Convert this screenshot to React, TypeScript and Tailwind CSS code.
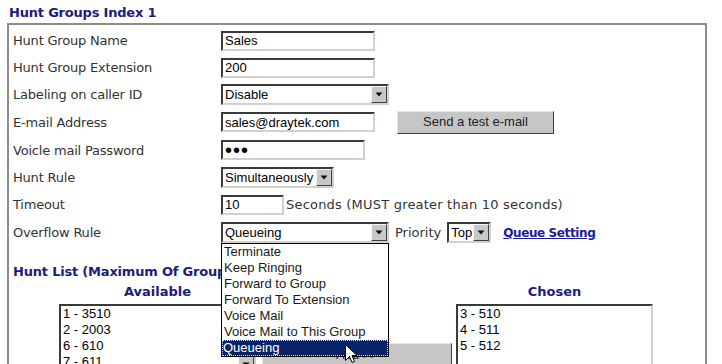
import React from "react";

const sunken =
  "border-2 border-t-[#3a3a3a] border-l-[#3a3a3a] border-b-[#d4d0c8] border-r-[#d4d0c8] bg-white";

function Arrow() {
  return (
    <div className="w-[16px] h-full shrink-0 bg-[#c8c8c8] border border-t-[#f4f4f4] border-l-[#f4f4f4] border-b-[#404040] border-r-[#404040] flex items-center justify-center">
      <svg width="8" height="5" viewBox="0 0 8 5">
        <path d="M0.5 0.5 H7.5 L4 4.5 Z" fill="#111" />
      </svg>
    </div>
  );
}

function Input({ w, value, children }: { w: string; value?: string; children?: React.ReactNode }) {
  return (
    <div
      className={`${w} h-[20px] ${sunken} flex items-center px-[2px] font-['Liberation_Sans',Arial,sans-serif] text-[13px] text-black leading-none overflow-hidden whitespace-nowrap`}
    >
      {children ?? value}
    </div>
  );
}

function Select({ w, value }: { w: string; value: string }) {
  return (
    <div
      className={`${w} h-[21px] ${sunken} flex items-stretch font-['Liberation_Sans',Arial,sans-serif] text-[13px] text-black`}
    >
      <div className="flex-1 flex items-center px-[2px] whitespace-nowrap overflow-hidden leading-none">{value}</div>
      <Arrow />
    </div>
  );
}

function Row({ h, label, children }: { h: string; label: string; children: React.ReactNode }) {
  return (
    <div className={`${h} flex items-center`}>
      <div className="w-[212px] shrink-0 pl-[4px] pt-[1px] text-[#333] whitespace-nowrap tracking-[-0.2px]">{label}</div>
      <div className="flex items-center">{children}</div>
    </div>
  );
}

function ListBox({ items, scroll }: { items: string[]; scroll?: boolean }) {
  return (
    <div className={`w-[197px] h-[120px] ${sunken} flex font-['Liberation_Sans',Arial,sans-serif] text-[13px] text-black`}>
      <div className="flex-1 pl-[2px] leading-[16px]">
        {items.map((t) => (
          <div key={t} className="h-[16px] whitespace-nowrap">
            {t}
          </div>
        ))}
      </div>
      {scroll && (
        <div className="w-[16px] bg-[#e4e2dc] flex flex-col">
          <Arrow />
        </div>
      )}
    </div>
  );
}

export default function App() {
  const opts = [
    "Terminate",
    "Keep Ringing",
    "Forward to Group",
    "Forward To Extension",
    "Voice Mail",
    "Voice Mail to This Group",
  ];
  return (
    <div className="w-[722px] h-[364px] overflow-hidden bg-white relative font-['DejaVu_Sans',Verdana,sans-serif] text-[13px]">
      <div className="h-[23px] pt-[5px] pl-[9px] font-bold text-[#1c1c7c] leading-[16px] tracking-[-0.2px]">Hunt Groups Index 1</div>
      <div className="ml-[7px] w-[700px] h-[400px] border-t-2 border-l-2 border-r-2 border-[#8c8c8c] pt-[2px]">
        <Row h="h-[27px]" label="Hunt Group Name">
          <Input w="w-[154px]" value="Sales" />
        </Row>
        <Row h="h-[27px]" label="Hunt Group Extension">
          <Input w="w-[154px]" value="200" />
        </Row>
        <Row h="h-[27px]" label="Labeling on caller ID">
          <Select w="w-[168px]" value="Disable" />
        </Row>
        <Row h="h-[28px]" label="E-mail Address">
          <Input w="w-[154px]" value="sales@draytek.com" />
          <div className="ml-[22px] w-[157px] h-[23px] bg-[#c6c6c6] border border-t-[#e8e8e8] border-l-[#e8e8e8] border-b-[#404040] border-r-[#404040] flex items-center justify-center font-['Liberation_Sans',Arial,sans-serif] text-[13px] text-[#222]">
            Send a test e-mail
          </div>
        </Row>
        <Row h="h-[28px]" label="Voicle mail Password">
          <Input w="w-[144px]">
            <span className="text-[20px] leading-none tracking-[1px]">•••</span>
          </Input>
        </Row>
        <Row h="h-[27px]" label="Hunt Rule">
          <Select w="w-[113px]" value="Simultaneously" />
        </Row>
        <Row h="h-[27px]" label="Timeout">
          <Input w="w-[63px]" value="10" />
          <span className="ml-[2px] pt-[1px] text-[#333] whitespace-nowrap tracking-[0.2px]">Seconds (MUST greater than 10 seconds)</span>
        </Row>
        <Row h="h-[28px]" label="Overflow Rule">
          <Select w="w-[168px]" value="Queueing" />
          <span className="ml-[6px] pt-[2px] text-[#333]">Priority</span>
          <div className="ml-[6px]">
            <Select w="w-[44px]" value="Top" />
          </div>
          <a className="ml-[12px] pt-[2px] text-[12px] tracking-[-0.4px] font-bold text-[#1a1aa0] underline whitespace-nowrap" href="#">
            Queue Setting
          </a>
        </Row>

        <div className="mt-[18px] pl-[4px] h-[16px] leading-[16px] font-bold text-[#1c1c7c] whitespace-nowrap tracking-[-0.2px]">
          Hunt List (Maximum Of Group Members: 8)
        </div>
        <div className="flex mt-[4px]">
          <div className="ml-[50px] w-[197px]">
            <div className="h-[16px] leading-[16px] text-center font-bold text-[#1c1c7c]">Available</div>
            <div className="mt-[4px]">
              <ListBox items={["1 - 3510", "2 - 2003", "6 - 610", "7 - 611", "8 - 612"]} scroll />
            </div>
          </div>
          <div className="w-[200px] pt-[59px]">
            <div className="ml-[6px] w-[190px] h-[24px] bg-[#c6c6c6] border border-t-[#e8e8e8] border-l-[#e8e8e8] border-b-[#404040] border-r-[#404040] flex items-center justify-center font-['Liberation_Sans',Arial,sans-serif] text-[13px] text-[#222]">
              Add &gt;&gt;
            </div>
          </div>
          <div className="w-[197px]">
            <div className="h-[16px] leading-[16px] text-center font-bold text-[#1c1c7c]">Chosen</div>
            <div className="mt-[4px]">
              <ListBox items={["3 - 510", "4 - 511", "5 - 512"]} />
            </div>
          </div>
        </div>
      </div>

      {/* open dropdown list */}
      <div className="absolute left-[221px] top-[243px] w-[168px] h-[114px] border border-black bg-white font-['Liberation_Sans',Arial,sans-serif] text-[13px] text-[#1a1a1a] leading-[16px]">
        {opts.map((o) => (
          <div key={o} className="h-[16px] pl-[2px] whitespace-nowrap">
            {o}
          </div>
        ))}
        <div className="h-[16px] pl-[1px] bg-[#0a246a] text-white outline-1 outline-dotted outline-offset-[-1px] outline-[#d8d8d8] whitespace-nowrap">
          Queueing
        </div>
      </div>

      {/* mouse cursor */}
      <svg className="absolute left-[345px] top-[344px]" width="13" height="21" viewBox="0 0 13 21">
        <path
          d="M0.5 0.5 L0.5 16.5 L4.5 12.5 L7 18.5 L9.5 17.5 L7 11.5 L12 11.5 Z"
          fill="#fff"
          stroke="#000"
          strokeWidth="1"
          strokeLinejoin="miter"
        />
      </svg>
    </div>
  );
}
